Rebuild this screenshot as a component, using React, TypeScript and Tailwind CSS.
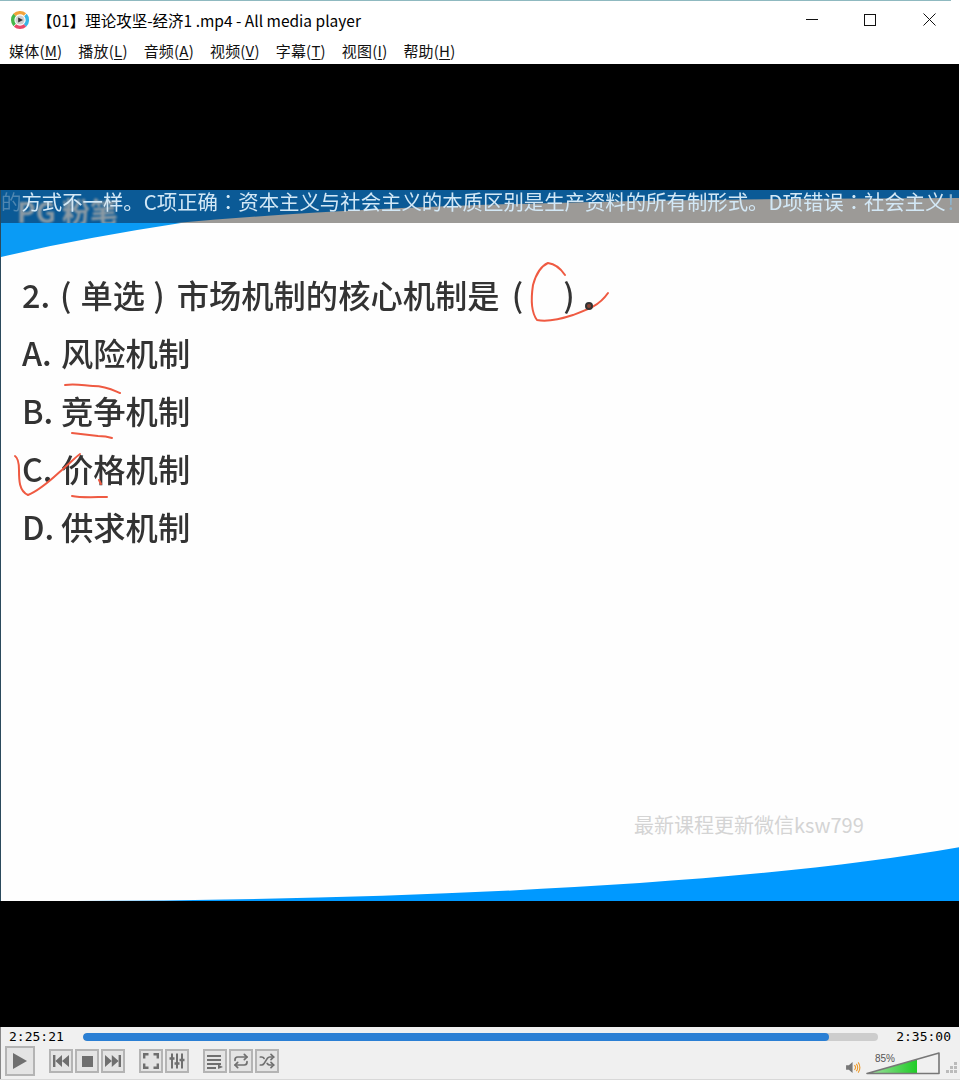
import { Repeat, Shuffle } from 'lucide-react'

const cjk = "font-['Noto_Sans_CJK_SC','Noto_Sans',sans-serif]"

const menus = [
  ['媒体(', 'M', ')'],
  ['播放(', 'L', ')'],
  ['音频(', 'A', ')'],
  ['视频(', 'V', ')'],
  ['字幕(', 'T', ')'],
  ['视图(', 'I', ')'],
  ['帮助(', 'H', ')'],
]

const options = [
  ['A.', '风险机制'],
  ['B.', '竞争机制'],
  ['C.', '价格机制'],
  ['D.', '供求机制'],
]

function Logo() {
  return (
    <svg width="20" height="20" viewBox="0 0 20 20" fill="none" strokeWidth="3.4">
      <path d="M4.5 5 A7.5 7.5 0 0 1 15 4.5" stroke="#f2a33a" />
      <path d="M15.5 5 A7.5 7.5 0 0 1 15 15.5" stroke="#38b6e6" />
      <path d="M15 15.5 A7.5 7.5 0 0 1 5 15.5" stroke="#e8476a" />
      <path d="M4.6 15 A7.5 7.5 0 0 1 4.6 5" stroke="#45b649" />
      <circle cx="10" cy="10" r="4.6" fill="#cfcfcf" stroke="none" />
      <path d="M8.2 7.4 L13 10 L8.2 12.6 Z" fill="#333" stroke="none" />
    </svg>
  )
}

function Btn({ children, className = 'w-[24px] h-[24px]' }: { children: React.ReactNode; className?: string }) {
  return (
    <div className={`${className} flex items-center justify-center border-2 border-[#b4b4b4] bg-[#e4e4e4] text-[#6f6f6f]`}>
      {children}
    </div>
  )
}

function Colon() {
  return <span className="font-['Noto_Sans_CJK_TC',sans-serif]">：</span>
}

function Video() {
  return (
    <div className={`relative flex-1 mr-[1px] bg-black overflow-hidden ${cjk}`}>
      {/* frame of the video: banner + slide */}
      <div className="absolute left-0 w-[1px] top-[126px] h-[711px] bg-[#2b4a5c]" />
      <div className="absolute left-[1px] right-0 top-[126px] h-[711px] bg-[#fefefe] overflow-hidden">
        <svg className="absolute inset-0" width="960" height="711" viewBox="0 0 960 711">
          <rect x="0" y="0" width="960" height="33" fill="#9c9a97" />
          <path d="M0 0 H960 V8 C700 9 420 11 175 33 H0 Z" fill="#0b5a96" />
          <path d="M0 33 H180 C120 42 60 53 0 67 Z" fill="#0a9bf5" />
          <path d="M0 711 C320 712 720 700 960 657 V711 Z" fill="#0099ff" />
        </svg>
        <div className="absolute left-0 top-0 w-[200px] h-[33px] overflow-hidden">
          <div className="pl-[16px] pt-[6px] text-[28px] leading-[30px] font-bold whitespace-nowrap text-[#8d9ba4] blur-[1.2px]">PG 粉笔</div>
        </div>
        <div className="absolute left-0 top-0 h-[22px] text-[20.4px] leading-[22px] whitespace-nowrap text-[#d3e8f6] blur-[0.4px]">
          <span className="text-[#4f86b0]">的</span>方式不一样。C项正确<Colon />资本主义与社会主义的本质区别是生产资料的所有制形式。D项错误<Colon />社会主义<span className="text-[#8fb4cc]">！</span>
        </div>

        <div className="absolute left-[21px] top-[75px] flex flex-col text-[32.3px] leading-[58px] font-medium text-[#333] blur-[0.5px]">
          <div className="flex whitespace-nowrap">
            <span>2.</span>
            <span className="ml-[10px]">(</span>
            <span className="ml-[9px]">单选</span>
            <span className="ml-[8px]">)</span>
            <span className="ml-[12px]">市场机制的核心机制是</span>
            <span className="ml-[12px]">(</span>
            <span className="ml-[40px]">)</span>
          </div>
          {options.map(([k, v]) => (
            <div key={k} className="flex whitespace-nowrap">
              <span className="w-[39px]">{k}</span>
              <span>{v}</span>
            </div>
          ))}
        </div>

        <div className="absolute left-[633px] top-[623px] text-[20px] leading-[24px] whitespace-nowrap text-[#d4d4d4]">最新课程更新微信ksw799</div>

        {/* pen strokes drawn on the slide */}
        <svg className="absolute inset-0" width="960" height="711" viewBox="0 0 960 711" fill="none" stroke="#ef5a42" strokeWidth="2" strokeLinecap="round" strokeLinejoin="round">
          <path d="M564 85 C560 79 555 74 547 73 C540 76 535 84 532 95 C530 108 530 122 536 130 C546 132 560 129 572 125 C586 120 598 116 607 103" />
          <path d="M64 195 C75 193 85 196 92 196 C105 196 112 200 119 203" />
          <path d="M71 243 C80 244 88 245 97 246 C103 246 108 247 111 248" />
          <path d="M14 266 C17 268 18 272 18 280 C18 290 18 301 27 305 C40 300 52 288 62 279 C70 272 76 266 79 264" />
          <path d="M71 306 C80 308 95 307 106 307" />
          <path d="M98 290 L100 294" />
        </svg>
        <div className="absolute left-[584px] top-[112px] w-[8px] h-[8px] rounded-full border-2 border-[#333] bg-[#884433]" />
      </div>
    </div>
  )
}

export default function App() {
  return (
    <div className={`w-[960px] h-[1080px] flex flex-col bg-white ${cjk}`}>
      <div className="h-[1px] w-[951px] bg-[#8fb9c0] shrink-0" />
      {/* Title bar */}
      <div className="h-[37px] shrink-0 flex items-center pl-[10px] text-black">
        <Logo />
        <div className="ml-[7px] text-[15.5px] leading-[20px] whitespace-nowrap">【01】理论攻坚-经济1 .mp4 - All media player</div>
        <div className="ml-auto flex items-center">
          <svg width="12" height="2" viewBox="0 0 12 2" className="mr-[46px]"><rect width="12" height="1" fill="#111" /></svg>
          <svg width="12" height="12" viewBox="0 0 12 12" className="mr-[47px]" fill="none" stroke="#111"><rect x="0.5" y="0.5" width="11" height="11" /></svg>
          <svg width="13" height="13" viewBox="0 0 13 13" className="mr-[24px]" fill="none" stroke="#111"><path d="M0.5 0.5 L12.5 12.5 M12.5 0.5 L0.5 12.5" /></svg>
        </div>
      </div>
      {/* Menu bar */}
      <div className="h-[26px] shrink-0 flex items-center pl-[9px] gap-[16px] text-[15px] leading-[20px] tracking-[0.2px] text-[#111]">
        {menus.map(([a, k, b]) => (
          <span key={k} className="whitespace-nowrap">
            {a}
            <span className="underline underline-offset-2">{k}</span>
            {b}
          </span>
        ))}
      </div>

      <Video />

      {/* Controls */}
      <div className="h-[52px] shrink-0 bg-[#f0f0f0] flex flex-col border-l border-[#888]">
        <div className="h-[18px] mt-[1px] flex items-center pl-[8px] pr-[9px] font-['DejaVu_Sans_Mono',monospace] text-[13px] text-black">
          <span className="w-[74px]">2:25:21</span>
          <div className="flex-1 h-[8px] rounded-[4px] bg-[#cdcdcd] overflow-hidden">
            <div className="h-full w-[93.8%] bg-[#2a7fd4] rounded-[4px]" />
          </div>
          <span className="w-[73px] text-right">2:35:00</span>
        </div>
        <div className="flex items-center pl-[4px] h-[30px]">
          <Btn className="w-[30px] h-[30px]">
            <svg width="16" height="18" viewBox="0 0 16 18" fill="#6f6f6f"><path d="M1 1 L15 9 L1 17 Z" /></svg>
          </Btn>
          <div className="flex gap-[2px] ml-[14px]">
            <Btn>
              <svg width="16" height="12" viewBox="0 0 16 12" fill="#6f6f6f"><rect width="2.4" height="12" /><path d="M9 0 L2.4 6 L9 12 Z M16 0 L9 6 L16 12 Z" /></svg>
            </Btn>
            <Btn>
              <svg width="11" height="11" viewBox="0 0 11 11" fill="#6f6f6f"><rect width="11" height="11" /></svg>
            </Btn>
            <Btn>
              <svg width="16" height="12" viewBox="0 0 16 12" fill="#6f6f6f"><rect x="13.6" width="2.4" height="12" /><path d="M0 0 L6.8 6 L0 12 Z M6.8 0 L13.6 6 L6.8 12 Z" /></svg>
            </Btn>
          </div>
          <div className="flex gap-[2px] ml-[14px]">
            <Btn>
              <svg width="16" height="16" viewBox="0 0 16 16" fill="none" stroke="#6f6f6f" strokeWidth="2.4"><path d="M1.2 5.5 V1.2 H5.5 M10.5 1.2 H14.8 V5.5 M14.8 10.5 V14.8 H10.5 M5.5 14.8 H1.2 V10.5" /></svg>
            </Btn>
            <Btn>
              <svg width="16" height="16" viewBox="0 0 16 16" fill="none" stroke="#6f6f6f" strokeWidth="2"><path d="M3 0.5 V15.5 M8 0.5 V15.5 M13 0.5 V15.5" /><path d="M0.5 5.5 H5.5 M5.5 10.5 H10.5 M10.5 7 H15.5" strokeWidth="2.6" /></svg>
            </Btn>
          </div>
          <div className="flex gap-[2px] ml-[14px]">
            <Btn>
              <svg width="16" height="15" viewBox="0 0 16 15" fill="#6f6f6f"><rect y="1" width="14" height="2" /><rect y="5" width="14" height="2" /><rect y="9" width="14" height="2" /><rect y="13" width="9" height="2" /><path d="M11 10.5 L16 13 L11 15 Z" /></svg>
            </Btn>
            <Btn><Repeat size={16} strokeWidth={2.6} /></Btn>
            <Btn><Shuffle size={16} strokeWidth={2.6} /></Btn>
          </div>
          <div className="ml-auto relative flex items-end h-full mr-[1px]">
            <svg width="15" height="13" viewBox="0 0 16 14" className="mb-[2px] mr-[5px]" fill="none">
              <path d="M0 4.5 H3 L7 1 V13 L3 9.5 H0 Z" fill="#777" />
              <path d="M9 4.5 C10.5 6 10.5 8 9 9.5 M11 3 C13 5 13 9 11 11 M13 1.5 C15.5 4.5 15.5 9.5 13 12.5" stroke="#ee9a2a" strokeWidth="1.2" />
            </svg>
            <svg width="74" height="24" viewBox="0 0 74 24" className="mb-[1px]">
              <defs>
                <linearGradient id="vol" x1="0" x2="1" y1="0" y2="0">
                  <stop offset="0" stopColor="#a8dfa8" />
                  <stop offset="1" stopColor="#1fcc26" />
                </linearGradient>
              </defs>
              <path d="M1 22.5 L51 8.3 V22.5 Z" fill="url(#vol)" />
              <path d="M1 22.5 L73 2 V22.5 Z" fill="none" stroke="#777" strokeWidth="1.6" strokeLinejoin="round" />
            </svg>
            <span className="absolute right-[64px] top-[7px] text-[10px] leading-[12px] text-[#555] font-['Liberation_Sans',sans-serif]">85%</span>
            <svg width="14" height="14" viewBox="0 0 14 14" className="mb-[1px] ml-[5px]" fill="#bbb">
              <rect x="9" y="1" width="3" height="3" /><rect x="5" y="5" width="3" height="3" /><rect x="9" y="5" width="3" height="3" />
              <rect x="1" y="9" width="3" height="3" /><rect x="5" y="9" width="3" height="3" /><rect x="9" y="9" width="3" height="3" />
            </svg>
          </div>
        </div>
      </div>
      <div className="h-[1px] bg-[#d8d8d8] shrink-0" />
    </div>
  )
}
